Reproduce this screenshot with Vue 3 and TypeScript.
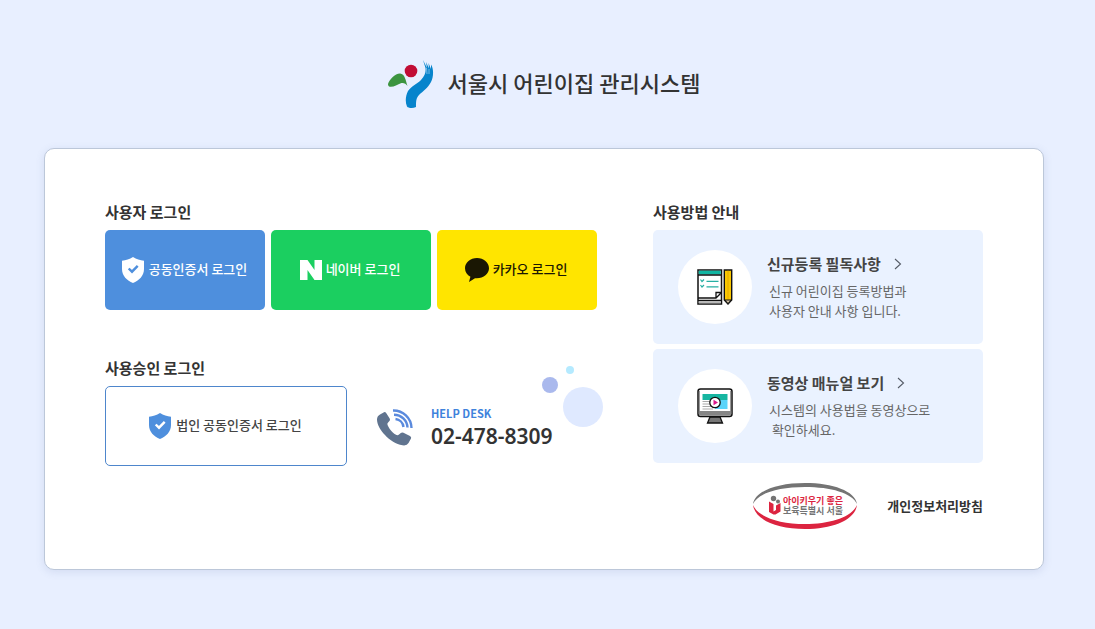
<script setup lang="ts">
interface LoginOption {
  id: 'cert' | 'naver' | 'kakao'
  label: string
}

interface Guide {
  id: 'notice' | 'video'
  title: string
  lines: string[]
}

const loginOptions: LoginOption[] = [
  { id: 'cert', label: '공동인증서 로그인' },
  { id: 'naver', label: '네이버 로그인' },
  { id: 'kakao', label: '카카오 로그인' },
]

const guides: Guide[] = [
  { id: 'notice', title: '신규등록 필독사항', lines: ['신규 어린이집 등록방법과', '사용자 안내 사항 입니다.'] },
  { id: 'video', title: '동영상 매뉴얼 보기', lines: ['시스템의 사용법을 동영상으로', '\u00a0확인하세요.'] },
]
</script>

<template>
  <div class="page">
    <header class="brand">
      <svg class="brand-mark" width="46" height="48" viewBox="0 0 46 48" aria-hidden="true">
        <circle cx="23" cy="11" r="6.3" fill="#c10d35" />
        <path d="M0 24C1 20 7 13.500 12 13.500C17 14 17.500 20 19.500 26C18 23.500 15.500 22.500 13.500 23C9 25 6 27 2 26.700C.5 26.500 0 25.500 0 24Z" fill="#3c9440" />
        <path d="M35 0L39 8L38 2L41 8.500L40.500 3L43 9L43 4.500C46 9 45.500 17 43 22C40 28 35 31 31 35C28 38 28 42 28 47C25 48.500 20.500 48.300 19 46.500C17 42 17.500 36 20 31C23 26.500 29 24 33 20C37 16 38 12 37.500 8Z" fill="#0784cc" />
        <path d="M38.500 8L39 14M41 9L41 14" stroke="#e8efff" stroke-width=".5" fill="none" />
      </svg>
      <h1>서울시 어린이집 관리시스템</h1>
    </header>

    <main class="panel">
      <div class="column">
        <section>
          <h2>사용자 로그인</h2>
          <div class="logins">
            <button v-for="option in loginOptions" :key="option.id" type="button" class="login" :class="option.id">
              <svg v-if="option.id === 'cert'" width="24" height="26" viewBox="0 0 24 26" aria-hidden="true">
                <path d="M12 0C15.500 2.300 19 3.300 23 3.700V12C23 19 18 23.500 12 26C6 23.500 1 19 1 12V3.700C5 3.300 8.500 2.300 12 0Z" fill="#fff" />
                <path d="M7.700 11.500L11 14.700L16.700 8.800" fill="none" stroke="#4e8fdd" stroke-width="2.400" />
              </svg>
              <svg v-else-if="option.id === 'naver'" width="22" height="20" viewBox="0 0 22 20" aria-hidden="true">
                <path d="M0 0H7.500L14.500 10V0H22V20H14.500L7.500 10V20H0Z" fill="#fff" />
              </svg>
              <svg v-else width="24" height="24" viewBox="0 0 24 24" aria-hidden="true">
                <path d="M12 0C5.400 0 0 4.500 0 10.200C0 14 2.200 17 5.400 18.800L4 24L10 20.200C18 21 24 16 24 10.200C24 4.500 18.600 0 12 0Z" fill="#1a1703" />
              </svg>
              <span class="login-label">{{ option.label }}</span>
            </button>
          </div>
        </section>

        <section>
          <h2>사용승인 로그인</h2>
          <div class="approval">
            <button type="button" class="login corporate">
              <svg width="24" height="26" viewBox="0 0 24 26" aria-hidden="true">
                <path d="M12 0C15.500 2.300 19 3.300 23 3.700V12C23 19 18 23.500 12 26C6 23.500 1 19 1 12V3.700C5 3.300 8.500 2.300 12 0Z" fill="#4e8fdd" />
                <path d="M7.700 11.500L11 14.700L16.700 8.800" fill="none" stroke="#fff" stroke-width="2.400" />
              </svg>
              <span class="login-label">법인 공동인증서 로그인</span>
            </button>
            <div class="help">
              <svg width="37" height="37" viewBox="0 0 37 37" aria-hidden="true">
                <path d="M3 5.500L7 3.200Q8.200 2.700 9 3.800L12.700 9.500Q13.500 11 12.400 12L10.500 14.200C9.500 16 14.500 23.500 19.500 26Q21 26.500 22 25.500L23.800 24Q25 23 26.500 23.800L33 27Q34.700 28 34 29.500L31.500 34Q30 37 25.500 36.300C13 34 0 20 0 10.500Q0 7 3 5.500Z" fill="#60748f" />
                <path d="M18.500 10A9 9 0 0 1 26.500 18M17 5.700A13.500 13.500 0 0 1 30.500 18.500M16 1.500A18 18 0 0 1 34.500 19" fill="none" stroke="#5a8add" stroke-width="2.400" />
              </svg>
              <div>
                <strong class="help-label">HELP DESK</strong>
                <span class="help-number">02-478-8309</span>
              </div>
              <svg class="bubbles" width="62" height="62" viewBox="0 0 62 62" aria-hidden="true">
                <circle cx="41" cy="41" r="20" fill="#dfe9ff" />
                <circle cx="8" cy="19" r="8" fill="#aab9ed" />
                <circle cx="28" cy="4" r="4" fill="#b5eaff" />
              </svg>
            </div>
          </div>
        </section>
      </div>

      <div class="column guide-column">
        <section>
          <h2>사용방법 안내</h2>
          <div class="guides">
            <a v-for="guide in guides" :key="guide.id" href="#" class="guide">
              <span class="disc">
                <svg v-if="guide.id === 'notice'" width="36" height="36" viewBox="0 0 36 36" aria-hidden="true">
                  <path d="M1 1H24.500V35H1Z" fill="#fff" stroke="#111" stroke-width="1.500" />
                  <path d="M1.700 1.700H23.800V5.500H1.700Z" fill="#12b5a2" />
                  <path d="M1 6H24.500M1 29H19L24.500 23.500M19 29V23.500H24.500M1 31.500H24.500" fill="none" stroke="#111" stroke-width="1.300" />
                  <path d="M1.700 32.200H23.800V34.300H1.700Z" fill="#b9b9b9" />
                  <path d="M3.500 10.500L5 12.500L7 10.500M3.500 16L5 18L7 16M9.500 12.300H21.500M9.500 17.800H21.500" fill="none" stroke="#27afa3" stroke-width="1.200" />
                  <path d="M27.300 1H34.700V31L31 35L27.300 31Z" fill="#f9c700" stroke="#111" stroke-width="1.400" />
                  <path d="M31 1.700V30.500" stroke="#e3a800" />
                  <path d="M27.800 31H34.200L31 34.500Z" fill="#d5c4a7" stroke="#111" />
                </svg>
                <svg v-else width="36" height="36" viewBox="0 0 36 36" aria-hidden="true">
                  <rect x="1" y="1" width="34" height="27.500" rx="2.500" fill="#fff" stroke="#111" stroke-width="1.500" />
                  <path d="M1.800 23H34.200V26Q34.200 27.700 32 27.700H4Q1.800 27.700 1.800 26Z" fill="#858585" />
                  <path d="M2.500 3V23M33.500 3V23" stroke="#999" />
                  <path d="M5.500 6H30.500V12H5.500Z" fill="#16b6a1" />
                  <path d="M18 12H30.500V21H18Z" fill="#5cd4fa" />
                  <path d="M5.500 13.500H15M5.500 16H15M5.500 18.500H15M5.500 21H16" stroke="#aaa" />
                  <circle cx="18" cy="14.500" r="5.200" fill="#fff" stroke="#111" stroke-width="1.300" />
                  <path d="M16.500 11.700L21 14.500L16.500 17.300Z" fill="#d9168b" />
                  <path d="M13 29H23L25.500 35H10.500Z" fill="#777" stroke="#111" stroke-width="1.300" />
                </svg>
              </span>
              <span class="guide-copy">
                <strong class="guide-title">
                  {{ guide.title }}
                  <svg width="8" height="12" viewBox="0 0 8 12" aria-hidden="true">
                    <path d="M1 1L6.500 6L1 11" fill="none" stroke="#555b66" stroke-width="1.100" />
                  </svg>
                </strong>
                <span v-for="line in guide.lines" :key="line" class="guide-line">{{ line }}</span>
              </span>
            </a>
          </div>
        </section>

        <footer class="footer">
          <svg width="106" height="48" viewBox="0 0 106 48" role="img" aria-label="아이키우기 좋은 보육특별시 서울">
            <path d="M1 22C3 9 25 1 53 1S103 9 105 22C100 11 79 5 53 5S6 11 1 22Z" fill="#747474" />
            <path d="M1 23C3 38 25 47 53 47S103 38 105 23C100 35 79 42 53 42S6 35 1 23Z" fill="#dc2440" />
            <circle cx="21.500" cy="16.500" r="2.700" fill="#747474" />
            <circle cx="26" cy="19.500" r="2" fill="#747474" />
            <path d="M17 19.500L21.500 22V29.500L24 28V23.500L28.500 21V29.500L23.500 32.500H21.500L17 30Z" fill="#dc2440" />
            <text x="31" y="22" class="emblem-text emblem-red">아이키우기 좋은</text>
            <text x="31" y="32" class="emblem-text emblem-gray">보육특별시 서울</text>
          </svg>
          <a href="#" class="privacy">개인정보처리방침</a>
        </footer>
      </div>
    </main>
  </div>
</template>

<style>
body {
  margin: 0;
  background: #e8efff;
}
</style>

<style scoped>
.page {
  box-sizing: border-box;
  min-height: 100vh;
  padding: 60px 51px 59px 44px;
  background: #e8efff;
  color: #333;
  font-family: "Noto Sans CJK KR", "Noto Sans", sans-serif;
  font-size: 13px;
}

.brand {
  display: flex;
  justify-content: center;
  gap: 14px;
  height: 48px;
}

h1 {
  margin: 0;
  font-size: 22px;
  font-weight: 500;
  line-height: 44px;
}

.panel {
  box-sizing: border-box;
  display: grid;
  grid-template-columns: minmax(0, 492fr) minmax(0, 330fr);
  column-gap: 56px;
  max-width: 1200px;
  margin: 40px auto 0;
  padding: 51px 60px 39px;
  border: 1px solid #bcc7d9;
  border-radius: 10px;
  background: #fff;
  box-shadow: 0 2px 8px rgba(90, 110, 160, 0.15);
}

.column {
  display: flex;
  flex-direction: column;
  gap: 46px;
}

.guide-column {
  gap: 19px;
}

h2 {
  margin: 0;
  font-size: 15px;
  font-weight: 700;
  line-height: 24px;
  padding-bottom: 6px;
}

.logins {
  display: grid;
  grid-template-columns: repeat(3, 1fr);
  gap: 6px;
}

.login {
  display: flex;
  align-items: center;
  justify-content: center;
  gap: 4px;
  box-sizing: border-box;
  height: 80px;
  padding: 0 2px 0 0;
  border: 0;
  border-radius: 5px;
  font-family: inherit;
  font-size: 13px;
  font-weight: 500;
  line-height: 20px;
  cursor: pointer;
}

.login-label {
  padding-bottom: 2px;
}

.cert {
  background: #4e8fdd;
  color: #fff;
}

.naver {
  background: #1bcf60;
  color: #fff;
}

.kakao {
  background: #ffe500;
  color: #1a1703;
}

.approval {
  display: grid;
  grid-template-columns: 242fr 220fr;
  gap: 30px;
}

.corporate {
  border: 1px solid #4e86cc;
  background: #fff;
  color: #444;
}

.help {
  position: relative;
  display: flex;
  align-items: center;
  gap: 17px;
  padding-top: 2px;
}

.help-label {
  display: block;
  color: #3f83dc;
  font-size: 11px;
  line-height: 18px;
}

.help-number {
  display: block;
  font-family: "Noto Sans", sans-serif;
  font-size: 21px;
  font-weight: 600;
  line-height: 28px;
}

.bubbles {
  position: absolute;
  top: -20px;
  right: -7px;
}

.guides {
  display: grid;
  gap: 5px;
}

.guide {
  display: flex;
  align-items: center;
  gap: 15px;
  box-sizing: border-box;
  min-height: 114px;
  padding: 20px 25px;
  border-radius: 5px;
  background: #eaf2ff;
  color: #666;
  text-decoration: none;
}

.disc {
  display: grid;
  flex: none;
  place-items: center;
  width: 74px;
  height: 74px;
  border-radius: 50%;
  background: #fff;
}

.guide-copy {
  padding-bottom: 1px;
}

.guide-title {
  display: flex;
  align-items: center;
  gap: 13px;
  margin-bottom: 5px;
  color: #444;
  font-size: 15px;
  line-height: 24px;
}

.guide-line {
  display: block;
  padding-left: 2px;
  line-height: 20px;
}

.footer {
  display: flex;
  align-items: center;
  justify-content: flex-end;
  gap: 29px;
}

.emblem-text {
  font-size: 9px;
  font-weight: 700;
}

.emblem-red {
  fill: #dc2440;
}

.emblem-gray {
  fill: #747474;
}

.privacy {
  color: #333;
  font-weight: 700;
  line-height: 20px;
  text-decoration: none;
}
</style>
